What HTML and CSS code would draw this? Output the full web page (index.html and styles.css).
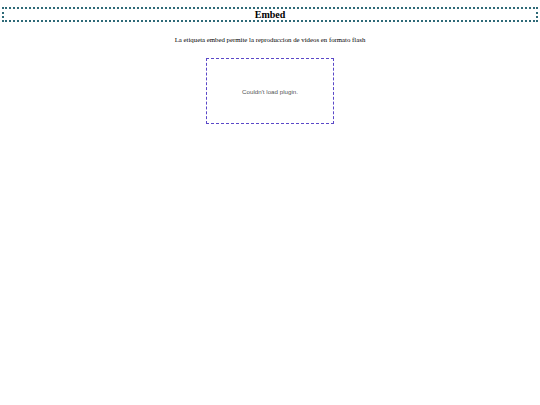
FILE: index.html
```html
<!DOCTYPE html>
<html>
<head>
<meta charset="utf-8">
<link rel="stylesheet" href="styles.css">
</head>
<body>
<h1 class="title">Embed</h1>
<p class="intro">La etiqueta embed permite la reproduccion de videos en formato flash</p>
<div class="plugin-wrap">
  <div class="plugin">Couldn't load plugin.</div>
</div>
</body>
</html>
```
FILE: styles.css
```css
html, body {
  margin: 0;
  padding: 0;
  background: #ffffff;
}
body {
  padding: 7px 2px 0 2px;
  font-family: "Liberation Serif", "Times New Roman", serif;
  color: #000;
}
.title {
  margin: 0;
  border: 2px dotted #2e6a78;
  font-size: 10px;
  line-height: 11px;
  text-align: center;
  font-weight: bold;
}
.intro {
  margin: 13px 0 0 0;
  font-size: 6.8px;
  line-height: 9px;
  text-align: center;
}
.plugin-wrap {
  display: flex;
  justify-content: center;
  margin-top: 14px;
}
.plugin {
  width: 126px;
  height: 64px;
  border: 1px dashed #5a48c8;
  display: flex;
  align-items: center;
  justify-content: center;
  font-family: "Liberation Sans", Arial, sans-serif;
  font-size: 6.2px;
  color: #555;
}
```
